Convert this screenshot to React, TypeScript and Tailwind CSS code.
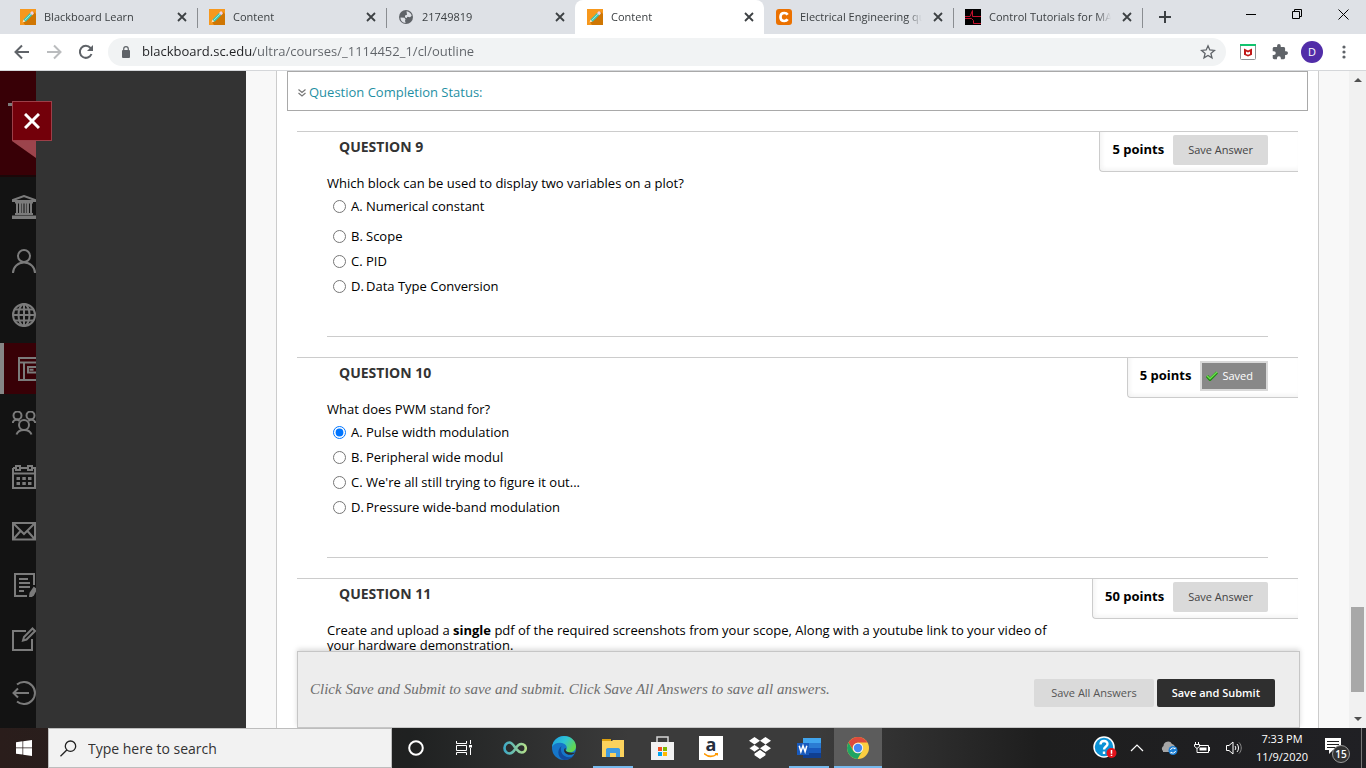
import { useState } from 'react';
import type { ReactNode } from 'react';

interface Question {
  number: number;
  points: number;
  text: ReactNode;
  options: string[];
}

const QUESTIONS: Question[] = [
  {
    number: 9,
    points: 5,
    text: 'Which block can be used to display two variables on a plot?',
    options: ['Numerical constant', 'Scope', 'PID', 'Data Type Conversion'],
  },
  {
    number: 10,
    points: 5,
    text: 'What does PWM stand for?',
    options: ['Pulse width modulation', 'Peripheral wide modul', "We're all still trying to figure it out...", 'Pressure wide-band modulation'],
  },
  {
    number: 11,
    points: 50,
    text: (
      <>
        Create and upload a <b>single</b> pdf of the required screenshots from your scope, Along with a youtube link to your video of your hardware demonstration.
      </>
    ),
    options: [],
  },
];

/* ---------- Favicons ---------- */

function PencilIcon() {
  return (
    <svg width="16" height="16" viewBox="0 0 16 16" className="shrink-0">
      <path d="M0 0h16v16H0z" fill="#f7981d" />
      <path d="M14 3l2 2v11H5l-2-3z" fill="#cf7603" />
      <path d="M2.500 13.500l1-3 2 2z" fill="#f8e3c0" />
      <path d="M3.500 10.500L10 4l2.200 2.200L5.700 12.700z" fill="#39c6b8" />
      <path d="M4.600 11.500L11 5.100" stroke="#a5f0dc" strokeWidth="1" />
      <path d="M10 4l1.300-1.300c.5-.5 1-.5 1.500 0l.7.7c.5.500.5 1 0 1.500L12.200 6.200z" fill="#e9d3ee" />
    </svg>
  );
}

function GlobeIcon() {
  return (
    <svg width="16" height="16" viewBox="0 0 16 16" className="shrink-0">
      <circle cx="8" cy="8" r="7" fill="#5f6368" />
      <path d="M2.500 8.500l4 .3 1 1.700-.5 1.200.6 2.300C4.500 13.800 2.300 11.500 2.500 8.500zM8.500 2.200c2.500.2 4.700 2 5.200 4.500L12 8.200l-2.500-.4-1 1.400-1.500-1L7 6.500l2-.7z" fill="#dee1e6" />
    </svg>
  );
}

function CheggIcon() {
  return (
    <svg width="16" height="16" viewBox="0 0 16 16" className="shrink-0">
      <rect width="16" height="16" rx="3" fill="#eb7100" />
      <path d="M11.600 5.800C10.900 4.600 9.700 4 8.300 4 6 4 4.500 5.700 4.500 8s1.500 4 3.800 4c1.400 0 2.600-.6 3.300-1.800" fill="none" stroke="#fff" strokeWidth="2.700" />
    </svg>
  );
}

function PlotIcon() {
  return (
    <svg width="16" height="16" viewBox="0 0 16 16" className="shrink-0">
      <path d="M0 0h16v16H0z" fill="#000" />
      <path d="M0 7.500h5l2.500-6v6H16M0 9.500h6.500l2 2v3H16" fill="none" stroke="#c4122f" />
    </svg>
  );
}

const TABS = [
  { title: 'Blackboard Learn', icon: <PencilIcon /> },
  { title: 'Content', icon: <PencilIcon /> },
  { title: '21749819', icon: <GlobeIcon /> },
  { title: 'Content', icon: <PencilIcon />, active: true },
  { title: 'Electrical Engineering question', icon: <CheggIcon /> },
  { title: 'Control Tutorials for MATLAB', icon: <PlotIcon /> },
];

function TabStrip() {
  return (
    <div className="flex h-[34px] shrink-0 bg-[#dee1e6] pl-2 text-[#3c4043]">
      {TABS.map((tab, i) => (
        <div
          key={i}
          className={`relative flex w-[189px] items-center gap-2 pl-3 pr-[7px] ${tab.active ? 'rounded-t-lg bg-white' : ''}`}
        >
          {tab.icon}
          <button className="flex-1 overflow-hidden whitespace-nowrap text-left text-[11px] [mask-image:linear-gradient(to_right,black_88%,transparent)]">
            {tab.title}
          </button>
          <button aria-label="Close tab" className="flex w-4 shrink-0 justify-center">
            <svg width="10" height="10" viewBox="0 0 10 10" stroke="#3c4043" strokeWidth="1.800">
              <path d="M1 1l8 8M9 1L1 9" />
            </svg>
          </button>
          {/* no divider on either side of the active tab */}
          {!tab.active && i !== 2 && <span className="absolute -right-px top-2 h-5 w-px bg-[#8a8d91]" />}
        </div>
      ))}
      <button aria-label="New tab" className="ml-4 flex items-center">
        <svg width="14" height="14" viewBox="0 0 14 14" stroke="#3c4043" strokeWidth="2">
          <path d="M7 1v12M1 7h12" />
        </svg>
      </button>
      <div className="ml-auto flex h-7 items-center">
        <button aria-label="Minimize" className="flex w-[46px] justify-center">
          <svg width="10" height="10" viewBox="0 0 10 10" stroke="#000"><path d="M0 5.500h10" /></svg>
        </button>
        <button aria-label="Restore" className="flex w-[46px] justify-center">
          <svg width="10" height="10" viewBox="0 0 10 10" stroke="#000" fill="none">
            <path d="M.5 2.500h7v7h-7zM2.500 2.500v-2h7v7h-2" />
          </svg>
        </button>
        <button aria-label="Close" className="flex w-[46px] justify-center">
          <svg width="11" height="11" viewBox="0 0 11 11" stroke="#000"><path d="M.5.5l10 10M10.500.5l-10 10" /></svg>
        </button>
      </div>
    </div>
  );
}

function Toolbar() {
  return (
    <div className="flex h-[37px] shrink-0 items-center border-b border-[#d5d7da] bg-white pl-[14px] pr-5">
      <button aria-label="Back">
        <svg width="16" height="16" viewBox="0 0 16 16" fill="none" stroke="#5f6368" strokeWidth="2"><path d="M15 8H2M8 1.500L1.500 8 8 14.500" /></svg>
      </button>
      <button aria-label="Forward" className="ml-4">
        <svg width="16" height="16" viewBox="0 0 16 16" fill="none" stroke="#babcbe" strokeWidth="2"><path d="M1 8h13M8 1.500L14.500 8 8 14.500" /></svg>
      </button>
      <button aria-label="Reload" className="ml-4">
        <svg width="16" height="16" viewBox="0 0 16 16" fill="none" stroke="#5f6368" strokeWidth="2">
          <path d="M13.500 10A6 6 0 1 1 12.500 4L14 5.500" />
          <path d="M15 1v6H9z" fill="#5f6368" stroke="none" />
        </svg>
      </button>
      <div className="ml-[14px] flex h-7 flex-1 items-center rounded-full bg-[#f1f3f4] pl-[13px] pr-[10px]">
        <svg width="10" height="12" viewBox="0 0 10 12" className="shrink-0">
          <rect x="1" y="4" width="8" height="8" rx="1" fill="#5f6368" />
          <path d="M2.700 5V3a2.300 2.300 0 0 1 4.600 0v2" fill="none" stroke="#5f6368" strokeWidth="1.200" />
        </svg>
        <input
          aria-label="Address"
          defaultValue="blackboard.sc.edu/ultra/courses/_1114452_1/cl/outline"
          className="ml-[11px] min-w-0 flex-1 bg-[linear-gradient(to_right,#202124_112px,#5f6368_112px)] bg-clip-text text-[13px] text-transparent outline-none"
        />
        <button aria-label="Bookmark">
          <svg width="16" height="16" viewBox="0 0 16 16" fill="none" stroke="#5f6368" strokeWidth="1.300">
            <path d="M8 1.800l1.800 4.200 4.600.4-3.500 3 1.100 4.500L8 11.500l-4 2.400 1.100-4.500-3.500-3L6.200 6z" />
          </svg>
        </button>
      </div>
      <button aria-label="McAfee WebAdvisor" className="ml-[14px]">
        <svg width="16" height="16" viewBox="0 0 16 16">
          <rect x=".5" y=".5" width="15" height="15" rx="1" fill="#fff" stroke="#8e9196" />
          <path d="M0 0h16v2H0z" fill="#12c36e" />
          <path d="M4 4.500l4 2 4-2v6.200l-4 1.800-4-1.800z" fill="#c01818" />
          <path d="M6 7.500l2 1 2-1V10l-2 .8L6 10z" fill="#fff" />
        </svg>
      </button>
      <button aria-label="Extensions" className="ml-4">
        <svg width="16" height="16" viewBox="1 1 22 22" fill="#5f6368">
          <path d="M20.500 11H19V7c0-1.100-.9-2-2-2h-4V3.500a2.500 2.500 0 0 0-5 0V5H4c-1.100 0-2 .9-2 2v3.800h1.500a2.700 2.700 0 0 1 0 5.400H2V20c0 1.100.9 2 2 2h3.800v-1.500a2.700 2.700 0 0 1 5.400 0V22H17c1.100 0 2-.9 2-2v-4h1.500a2.500 2.500 0 0 0 0-5z" />
        </svg>
      </button>
      <button className="ml-[13px] h-[22px] w-[22px] rounded-full bg-[#512da8] text-[11px] text-white">D</button>
      <button aria-label="Menu" className="ml-[19px]">
        <svg width="4" height="14" viewBox="0 0 4 14" fill="#5f6368">
          <circle cx="2" cy="2" r="1.600" /><circle cx="2" cy="7" r="1.600" /><circle cx="2" cy="12" r="1.600" />
        </svg>
      </button>
    </div>
  );
}

/* ---------- Left navigation ---------- */

const NAV_ITEMS = [
  {
    label: 'Institution',
    art: <path d="M1 6V5l11-4 11 4v1zM3 7.500h18M5 8v10M8 8v10M10.500 8v10M13.500 8v10M16 8v10M19 8v10M3 19h18M1 21.500h22v1.800H1z" />,
  },
  { label: 'Profile', art: <><circle cx="12" cy="7" r="6" /><path d="M1 24c0-6 5-10.500 11-10.500S23 18 23 24" /></> },
  {
    label: 'Activity',
    art: <><circle cx="12" cy="12" r="11" /><ellipse cx="12" cy="12" rx="5.500" ry="11" /><path d="M12 1v22M1 12h22M3 6.500h18M3 17.500h18" /></>,
  },
  { label: 'Courses', active: true, art: <path d="M1 1h22v22H1zM1 5.500h22M6 5.500V23M24 10H10v5.500h14M11.500 12.700h4" /> },
  {
    label: 'Organizations',
    art: <><circle cx="5.500" cy="4.500" r="4" /><circle cx="18.500" cy="4.500" r="4" /><circle cx="12" cy="14" r="5" /><path d="M.8 12c0-2 2-3.500 4.700-3.500l2 1.500M23.200 12c0-2-2-3.500-4.700-3.500l-2 1.500M4.500 23.500c1-3 4-4.500 7.500-4.500s6.500 1.500 7.500 4.500" /></>,
  },
  {
    label: 'Calendar',
    art: <><path d="M1 3h3M8 3h8M20 3h3v20H1V3M1 8.500h22M4 1h4v4H4zM16 1h4v4h-4z" /><path d="M4.500 13.500h3.500M10.300 13.500h3.500M16 13.500h3.500M4.500 18.500h3.500M10.300 18.500h3.500M16 18.500h3.500" strokeWidth="3" /></>,
  },
  { label: 'Messages', art: <path d="M1 4h22v16.500H1zM1 4l11 11L23 4M1 20.500l7.500-8.500M23 20.500L15.500 12" /> },
  {
    label: 'Grades',
    art: <><path d="M22 12V1H3v22h12M7 6h9M7 10h11M7 14h11M7 18h5" /><path d="M22 15l2 1.500-3 5.500-3 2 .5-4z" fill="#7b7b7b" /></>,
  },
  { label: 'Tools', art: <><path d="M14 4H1v19h19V12" /><path d="M20.500 1.500l2.500 2.500-8.500 8.500-3.500 1 1-3.500z" /></> },
  { label: 'Sign Out', art: <path d="M5 3.500a11 11 0 1 1 0 17M17 12H1M6 7.500L1.500 12 6 16.500" /> },
];

function SideNav() {
  return (
    <div className="relative flex shrink-0 bg-[#333]">
      <nav className="flex w-9 flex-col overflow-hidden bg-[#131313]">
        <div className="mb-1 h-[106px] shrink-0 border-b-2 border-[#1b0708] bg-[#380006] pl-2 pt-8">
          <div className="h-[3px] w-1 bg-[#7b7b7b]" />
        </div>
        <div className="flex flex-col gap-[3px]">
          {NAV_ITEMS.map(item => (
            <a
              key={item.label}
              href="#"
              aria-label={item.label}
              className={`flex h-[51px] items-center overflow-hidden ${item.active ? 'border-l-4 border-[#868686] bg-[#380006] pl-[14px]' : 'pl-3'}`}
            >
              <svg width="24" height="24" viewBox="0 0 24 24" fill="none" stroke="#7b7b7b" strokeWidth="2" className="shrink-0">
                {item.art}
              </svg>
            </a>
          ))}
        </div>
      </nav>
      <div className="w-[210px]" />
      {/* Close ribbon hangs over both columns */}
      <div className="absolute left-3 top-[30px]">
        <button aria-label="Close panel" className="flex h-10 w-10 items-center justify-center border border-[#9c3f48] bg-[#73000a]">
          <svg width="16" height="16" viewBox="0 0 16 16" stroke="#fff" strokeWidth="3"><path d="M1 1l14 14M15 1L1 15" /></svg>
        </button>
        <svg width="24" height="17" viewBox="0 0 24 17" className="block"><path d="M0 0h24v17z" fill="#9c444c" /></svg>
      </div>
    </div>
  );
}

/* ---------- Test content ---------- */

function CheckIcon() {
  return (
    <svg width="12" height="10" viewBox="0 0 12 10">
      <path d="M1 5l3 3.500L11 1.500" fill="none" stroke="#1f8a12" strokeWidth="3" />
      <path d="M1 4.700l3 3L11 1" fill="none" stroke="#6be04c" strokeWidth="1.500" />
    </svg>
  );
}

function QuestionBlock({ question, first }: { question: Question; first: boolean }) {
  const [selected, setSelected] = useState(question.number === 10 ? 0 : -1);
  const { number, points, text, options } = question;

  return (
    <section className="border-t border-[#ccc]">
      <div className="flex h-10 items-start justify-between">
        <h3 className="pl-[42px] text-[14px] font-bold leading-[30px] text-[#333]">QUESTION {number}</h3>
        <div className="flex h-10 items-start gap-[9px] rounded-bl-[4px] border-b border-l border-[#ccc] pl-3 pr-[30px] pt-[3px] shadow-[inset_2px_-2px_4px_#f3f3f3]">
          <span className="text-[13px] font-bold leading-[28px]">{points} points</span>
          {selected >= 0 ? (
            <button className="flex h-[30px] items-center gap-1 border-2 border-[#d9d9d9] bg-[#888] pl-1 pr-[13px] text-[11px] text-white">
              <CheckIcon />
              Saved
            </button>
          ) : (
            <button className="h-[30px] rounded-[2px] bg-[#dadada] px-[15px] text-[11px] text-[#444]">Save Answer</button>
          )}
        </div>
      </div>
      <div className="mx-[30px] mt-1 border-b border-[#ccc] pb-[37px]">
        <p className="max-w-[740px] text-[13px] leading-[15px]">{text}</p>
        <div className="mt-[3px]">
          {options.map((option, i) => (
            <label key={option} className={`flex h-[25px] items-center pl-[6px] text-[13px] ${first && i === 0 ? 'mb-[5px]' : ''}`}>
              <input
                type="radio"
                name={`question-${number}`}
                checked={selected === i}
                onChange={() => setSelected(i)}
                className="mr-[5px] h-[13px] w-[13px] shrink-0"
              />
              <span className="w-[15px]">{'ABCD'[i]}.</span>
              <span>{option}</span>
            </label>
          ))}
        </div>
      </div>
      <div className="h-5" />
    </section>
  );
}

function TestPage() {
  return (
    <main className="relative mx-[30px] min-w-0 flex-1 overflow-hidden border-x border-[#ccc] bg-white text-black">
      <div className="mx-[10px] mb-5 flex h-10 items-center gap-[3px] border border-[#a9a9a9] pl-[10px] pt-1">
        <svg width="8" height="8" viewBox="0 0 8 8" fill="none" stroke="#777" strokeWidth="1.200"><path d="M.5.5L4 3.500 7.500.5M.5 4L4 7l3.500-3" /></svg>
        <a href="#" className="text-[13px] text-[#1f8fa3]">Question Completion Status:</a>
      </div>
      <div className="mx-5">
        {QUESTIONS.map((question, i) => (
          <QuestionBlock key={question.number} question={question} first={i === 0} />
        ))}
      </div>
      {/* Submit bar sticks to the bottom over the questions */}
      <div className="absolute bottom-0 left-5 right-[18px] flex items-center justify-between gap-4 border border-[#c6c6c6] bg-[#ededed] pb-5 pl-3 pr-6 pt-[27px] shadow-[0_-2px_5px_rgba(0,0,0,0.15)]">
        <p className="-mt-2 font-['Liberation_Serif',serif] text-[15px] italic leading-5 text-[#6e6e6e]">
          Click Save and Submit to save and submit. Click Save All Answers to save all answers.
        </p>
        <div className="flex shrink-0 gap-[3px]">
          <button className="h-7 rounded-[2px] bg-[#dadada] px-[17px] text-[11px] text-[#555]">Save All Answers</button>
          <button className="h-7 rounded-[2px] bg-[#2f2f2f] px-[15px] text-[11px] font-semibold text-white">Save and Submit</button>
        </div>
      </div>
    </main>
  );
}

function ScrollTrack() {
  return (
    <div className="flex w-[17px] shrink-0 flex-col items-center bg-[#f1f1f1] py-[7px]">
      <svg width="8" height="4" viewBox="0 0 8 4" fill="#505050"><path d="M0 4l4-4 4 4z" /></svg>
      <div className="flex-1" />
      <div className="mb-[25px] h-[85px] w-[13px] bg-[#a8a8a8]" />
      <svg width="8" height="4" viewBox="0 0 8 4" fill="#505050"><path d="M0 0l4 4 4-4z" /></svg>
    </div>
  );
}

/* ---------- Windows taskbar ---------- */

const APPS = [
  {
    label: 'Infinity',
    art: (
      <svg width="24" height="14" viewBox="0 0 24 14" fill="none" strokeWidth="2.600">
        <defs>
          <linearGradient id="loop" x1="0" x2="1" y1="0" y2="0">
            <stop offset="0" stopColor="#3fa9c4" /><stop offset="1" stopColor="#b4e08a" />
          </linearGradient>
        </defs>
        <path d="M12.500 7C10 3.500 9 1.500 6.500 1.500a5 5.500 0 0 0 0 11C9 12.500 11 10 12.500 7.500S15.500 3 18.500 3a4 4 0 0 1 0 8.500c-3 0-4-2.500-6-4.500z" stroke="url(#loop)" />
      </svg>
    ),
  },
  {
    label: 'Edge',
    art: (
      <svg width="24" height="24" viewBox="0 0 24 24">
        <defs>
          <linearGradient id="edge-top" x1="0" y1="0" x2="1" y2="0.500">
            <stop offset="0" stopColor="#1b9de2" /><stop offset=".55" stopColor="#2fc4d4" /><stop offset="1" stopColor="#62d750" />
          </linearGradient>
        </defs>
        <circle cx="12" cy="12" r="12" fill="#1676c9" />
        <path d="M0 11C1 4 6 0 12 0c7 0 12 5 12 10.500 0 3.500-2.800 6-6.500 6-2.500 0-4-1-3.500-2 1.500-2 1-5-1.500-6.500C8 5.500 2 7 0 11z" fill="url(#edge-top)" />
        <path d="M9.500 10c-2 5 1 11 7.500 11.300 2 0 4-.8 5.500-2.300C20 22.500 16 24 12 24 7 23 3.500 15 9.500 10z" fill="#124a9c" />
        <path d="M23.500 16.500c-3 3.300-9 3-11-.5-.8-1.500-.3-3 .8-4.300.7 1-.3 2 .7 3.300 2 2 6 1.800 9.500 1.500z" fill="#2b2b2b" />
      </svg>
    ),
  },
  {
    label: 'File Explorer',
    running: true,
    art: (
      <svg width="22" height="20" viewBox="0 0 22 20">
        <path d="M0 3h10l1-1h11v17H0z" fill="#fbd25d" />
        <path d="M0 1h9v2H0z" fill="#dda10f" />
        <path d="M4 19v-8l1.500-1h11l1.500 1v8h-4v-4H8v4z" fill="#3f9be0" />
      </svg>
    ),
  },
  {
    label: 'Microsoft Store',
    art: (
      <svg width="24" height="24" viewBox="0 0 24 24">
        <path d="M7 6V1h11v5" fill="none" stroke="#d5d5d5" strokeWidth="1.500" />
        <path d="M1 6h23v18H1z" fill="#f2f2f2" />
        <path d="M8 11h4v4H8z" fill="#f25022" /><path d="M13 11h4v4h-4z" fill="#7fba00" />
        <path d="M8 16h4v4H8z" fill="#00a4ef" /><path d="M13 16h4v4h-4z" fill="#ffb900" />
      </svg>
    ),
  },
  {
    label: 'Amazon',
    art: (
      <span className="flex h-6 w-6 flex-col items-center bg-white text-[#252f3e]">
        <b className="text-[18px] leading-[17px]">a</b>
        <svg width="14" height="5" viewBox="0 0 14 5" fill="none" stroke="#f90" strokeWidth="1.500"><path d="M0 .5c4 3.500 9 3.500 13 .5M11 .5h2.500v2" /></svg>
      </span>
    ),
  },
  {
    label: 'Dropbox',
    art: (
      <svg width="24" height="22" viewBox="0 0 24 22" fill="#fff">
        <path d="M6.500 0L12 3.700 6.500 7.400 1 3.700zM17.500 0L23 3.700l-5.500 3.700L12 3.700zM6.500 7.600l5.500 3.700L6.500 15 1 11.300zM17.500 7.600l5.500 3.700-5.500 3.700L12 11.300zM12 12.800l5.500 3.700v1.800L12 22l-5.500-3.700v-1.800z" />
        <path d="M1 11.300l5.500-3.700L12 11.300l-5.500 3.700zM6.500 16l5.500-3.700 5.500 3.700" fill="none" stroke="#3a3a3a" strokeWidth=".7" />
      </svg>
    ),
  },
  {
    label: 'Word',
    running: true,
    art: (
      <svg width="24" height="22" viewBox="0 0 24 22">
        <path d="M6 1h18v5H6z" fill="#41a5ee" /><path d="M6 6h18v5H6z" fill="#2b7cd3" />
        <path d="M6 11h18v5H6z" fill="#185abd" /><path d="M6 16h18v5H6z" fill="#103f91" />
        <path d="M0 6h12v12H0z" fill="#185abd" />
        <path d="M2.200 8.800l1.700 6 2.100-6 2.100 6 1.700-6" fill="none" stroke="#fff" strokeWidth="1.500" />
      </svg>
    ),
  },
  {
    label: 'Chrome',
    running: true,
    active: true,
    art: (
      <svg width="22" height="22" viewBox="0 0 22 22">
        <circle cx="11" cy="11" r="11" fill="#fbce41" />
        <path d="M1.500 5.500A11 11 0 0 1 20.500 5.500H11a5.500 5.500 0 0 0-5 7.500z" fill="#dc4a3d" />
        <path d="M1.500 5.500A11 11 0 0 0 10.500 22l5-8.500a5.500 5.500 0 0 1-9.500 0z" fill="#1fa463" />
        <circle cx="11" cy="11" r="5.200" fill="#f4f4f4" /><circle cx="11" cy="11" r="4.200" fill="#4687f4" />
      </svg>
    ),
  },
];

function Taskbar() {
  return (
    <footer className="flex h-10 shrink-0 items-stretch bg-[linear-gradient(to_right,#2a1d1b,#1f2121_30%,#3b3b3b_46%,#3b3b3b_60%,#1e1e1e_76%,#202024)] text-white">
      <button aria-label="Start" className="flex w-12 items-center justify-center">
        <svg width="16" height="16" viewBox="0 0 16 16" fill="#fff"><path d="M0 2.200l6.500-.9v6.200H0zM7.200 1.200L16 0v7.500H7.200zM0 8.300h6.500v6.300L0 13.700zM7.200 8.300H16V16l-8.800-1.200z" /></svg>
      </button>
      <label className="flex w-[344px] items-center border border-[#bdbdbd] bg-[#f2f2f2] pl-[11px] text-[#2b2b2b]">
        <svg width="17" height="17" viewBox="0 0 17 17" fill="none" stroke="#222" strokeWidth="1.300"><circle cx="10.500" cy="6.200" r="5.200" /><path d="M6.800 10L.5 16.300" /></svg>
        <input placeholder="Type here to search" className="ml-[11px] min-w-0 flex-1 bg-transparent text-[14px] outline-none placeholder:text-[#333]" />
      </label>
      <button aria-label="Cortana" className="flex w-12 items-center justify-center">
        <svg width="16" height="16" viewBox="0 0 16 16" fill="none" stroke="#fff" strokeWidth="2"><circle cx="8" cy="8" r="6.800" /></svg>
      </button>
      <button aria-label="Task View" className="flex w-12 items-center justify-center">
        <svg width="16" height="16" viewBox="0 0 16 16" fill="none" stroke="#fff">
          <path d="M.5 1v2.500h10V1M.5 5.500h10v5H.5zM.5 15v-2.500h10V15M14.500 0v4M14.500 8v7" /><path d="M13 5h3v2.500h-3z" fill="#fff" stroke="none" />
        </svg>
      </button>
      <div className="ml-[3px] flex gap-px">
        {APPS.map(app => (
          <button key={app.label} aria-label={app.label} className={`relative flex w-12 items-center justify-center ${app.active ? 'bg-[#5c5c5c]' : ''}`}>
            {app.art}
            {app.running && <span className={`absolute bottom-0 h-[2px] bg-[#76b9ed] ${app.active ? 'w-12' : 'w-10'}`} />}
          </button>
        ))}
      </div>
      <div className="ml-auto flex items-center">
        <svg width="24" height="24" viewBox="0 0 24 24" role="img" aria-label="Help">
          <circle cx="11" cy="11" r="10" fill="#0b92d6" stroke="#fff" strokeWidth="1.500" />
          <path d="M7.500 8.500C7.500 4 14.500 4 14.500 8c0 2.500-3.500 2.500-3.500 5.500M11 15.500V18" fill="none" stroke="#fff" strokeWidth="2.400" />
          <circle cx="18.500" cy="17" r="5" fill="#e3131b" /><path d="M18.500 14v3.700M18.500 18.700V20" stroke="#fff" strokeWidth="1.500" />
        </svg>
        <button aria-label="Show hidden icons" className="ml-[13px]">
          <svg width="14" height="8" viewBox="0 0 14 8" fill="none" stroke="#fff" strokeWidth="1.200"><path d="M1 7l6-6 6 6" /></svg>
        </button>
        <svg width="17" height="14" viewBox="0 0 17 14" className="ml-[17px]">
          <path d="M2 10a3 3 0 0 1 .5-5A4.500 4.500 0 0 1 11 3a4 4 0 0 1 3 4l-5 4H2z" fill="#a5a5a5" />
          <circle cx="12" cy="9.500" r="4.500" fill="#1b7fd6" />
          <path d="M9.500 9a2.500 2.500 0 0 1 4.500-1V6.500M14.500 10a2.500 2.500 0 0 1-4.500 1v1.500" fill="none" stroke="#fff" />
        </svg>
        <svg width="16" height="12" viewBox="0 0 16 12" fill="none" stroke="#fff" className="ml-4">
          <path d="M1.500 0v2M4.500 0v2M.5 2.500h5v2l-2 1.500h-1l-2-1.500zM3 6v4.500h11.500v-7H6" /><path d="M15 5h1v4h-1zM5.500 5.500h7v3h-7z" fill="#fff" stroke="none" />
        </svg>
        <svg width="17" height="14" viewBox="0 0 17 14" fill="none" stroke="#fff" className="ml-4">
          <path d="M.5 4.500h2.500l4-3.500v12L3 9.500H.5zM9 5c1 1 1 3 0 4M11 3c2 2 2 6 0 8" /><path d="M13 1.500c3 3 3 8 0 11" stroke="#8a8a8a" />
        </svg>
        <div className="ml-3 w-[54px] whitespace-nowrap text-center text-[11px] leading-[18px]">
          <div>7:33 PM</div>
          <div>11/9/2020</div>
        </div>
        <button aria-label="15 notifications" className="relative ml-4 h-7 w-[25px]">
          <svg width="16" height="16" viewBox="0 0 16 16" className="absolute left-0 top-1"><path d="M0 0h16v12h-8l-4 4v-4H0z" fill="#fff" /><path d="M2 3.500h12M2 6.500h12M2 9.500h9" stroke="#222" /></svg>
          <span className="absolute left-[7px] top-[11px] flex h-[18px] w-[18px] items-center justify-center rounded-full border border-[#999] bg-[#333] text-[10px] font-semibold">15</span>
        </button>
        <div className="ml-[11px] mr-1 h-10 w-px bg-[#777]" />
      </div>
    </footer>
  );
}

export default function App() {
  return (
    <div className="flex h-screen flex-col overflow-hidden font-['Open_Sans','Noto_Sans',sans-serif]">
      <TabStrip />
      <Toolbar />
      <div className="flex min-h-0 flex-1 overflow-hidden bg-[#f8f8f8]">
        <SideNav />
        <TestPage />
        <ScrollTrack />
      </div>
      <Taskbar />
    </div>
  );
}
